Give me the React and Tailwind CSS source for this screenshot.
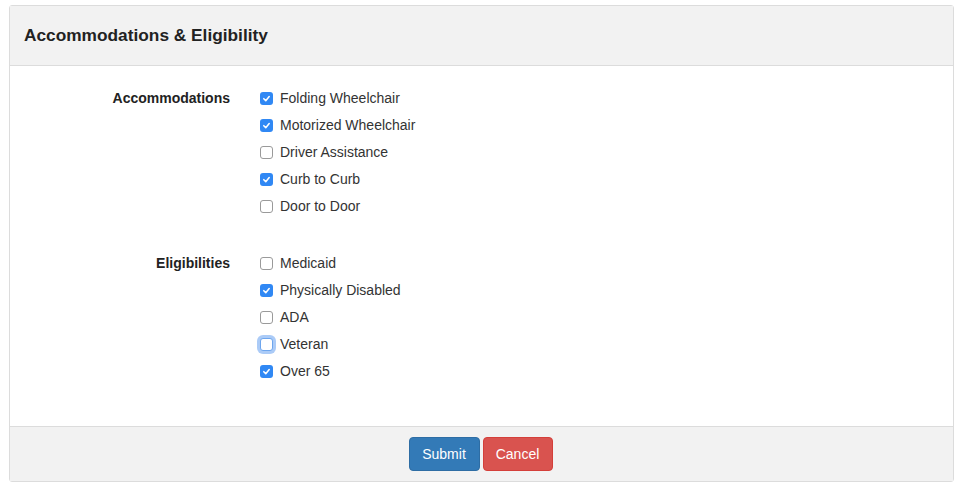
import React from "react";

function Check({ checked, focused }) {
  if (checked) {
    return (
      <span className="flex h-[13px] w-[13px] items-center justify-center rounded-[3px] bg-[#3088f4]">
        <svg width="9" height="9" viewBox="0 0 10 10">
          <path d="M2 5.2 L4.2 7.4 L8 2.8" fill="none" stroke="white" strokeWidth="1.7" strokeLinecap="round" strokeLinejoin="round" />
        </svg>
      </span>
    );
  }
  return (
    <span
      className={
        "block h-[13px] w-[13px] rounded-[3px] border bg-white " +
        (focused ? "border-[#6ea6ee] shadow-[0_0_0_3px_rgba(102,160,240,0.55)]" : "border-[#9a9a9a]")
      }
    />
  );
}

function Group({ label, items }) {
  return (
    <div className="flex">
      <div className="w-[220px] shrink-0 text-right font-bold leading-[27px] text-[#222]">{label}</div>
      <div className="ml-[30px] flex flex-col">
        {items.map(([text, checked, focused]) => (
          <label key={text} className="flex h-[27px] items-center">
            <Check checked={checked} focused={focused} />
            <span className="ml-[7px]">{text}</span>
          </label>
        ))}
      </div>
    </div>
  );
}

export default function App() {
  return (
    <div className="bg-white px-[9px] pt-[5px] pb-[7px] text-[14px] text-[#333] font-['Liberation_Sans',Arial,sans-serif]">
      <div className="rounded-[3px] border border-[#dcdcdc] bg-white">
        <div className="flex h-[60px] items-center border-b border-[#dcdcdc] bg-[#f2f2f2] px-[14px]">
          <h1 className="text-[17.3px] font-bold text-[#222]">Accommodations &amp; Eligibility</h1>
        </div>
        <div className="pt-[19px] pb-[41px]">
          <Group
            label="Accommodations"
            items={[
              ["Folding Wheelchair", true],
              ["Motorized Wheelchair", true],
              ["Driver Assistance", false],
              ["Curb to Curb", true],
              ["Door to Door", false],
            ]}
          />
          <div className="h-[30px]" />
          <Group
            label="Eligibilities"
            items={[
              ["Medicaid", false],
              ["Physically Disabled", true],
              ["ADA", false],
              ["Veteran", false, true],
              ["Over 65", true],
            ]}
          />
        </div>
        <div className="flex h-[55px] items-center justify-center gap-[3px] border-t border-[#dcdcdc] bg-[#f2f2f2] pr-[2px]">
          <button className="h-[34px] w-[71px] rounded-[4px] border border-[#2e6da4] bg-[#337ab7] text-[14px] text-white">
            Submit
          </button>
          <button className="h-[34px] w-[70px] rounded-[4px] border border-[#d43f3a] bg-[#d9534f] text-[14px] text-white">
            Cancel
          </button>
        </div>
      </div>
    </div>
  );
}
